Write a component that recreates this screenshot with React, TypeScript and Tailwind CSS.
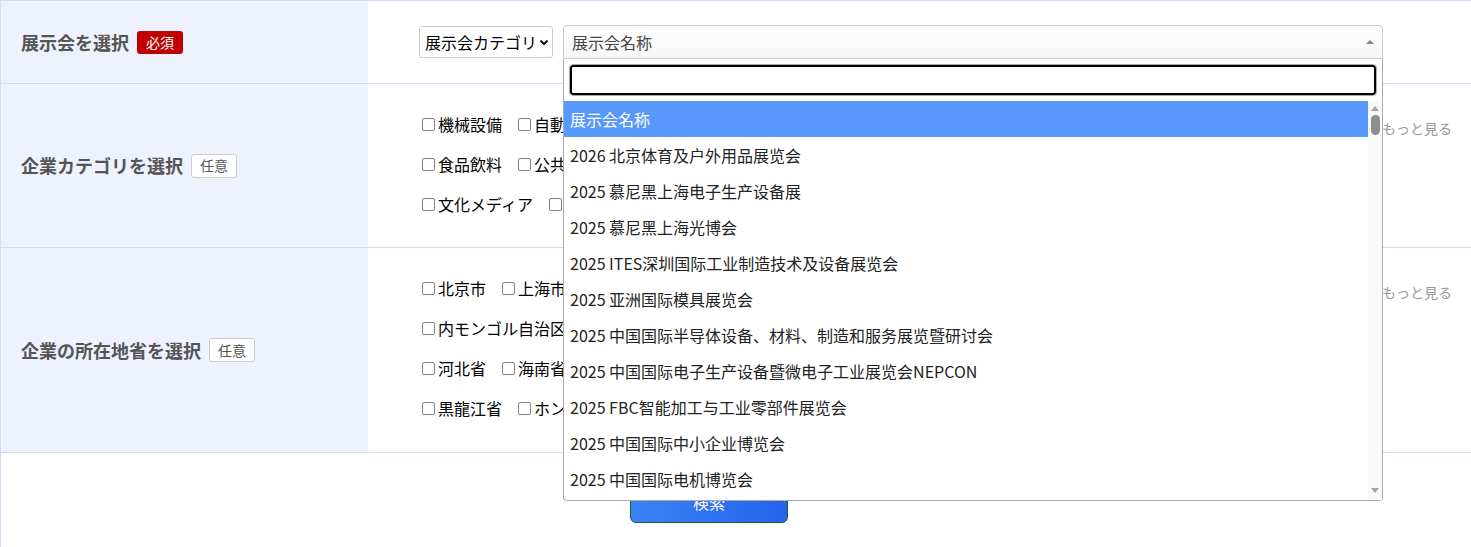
import React from "react";

const JP = { fontFamily: '"Noto Sans CJK JP", "Noto Sans", sans-serif' };
const SC = { fontFamily: '"Noto Sans CJK SC", "Noto Sans", sans-serif' };

function Box() {
  return <span className="inline-block w-[13px] h-[13px] border border-[#858585] rounded-[2px] bg-white mr-[3px] shrink-0" />;
}

function Item({ label }: { label: string }) {
  return (
    <span className="inline-flex items-center mr-[16px] text-[16px] text-black">
      <Box />
      {label}
    </span>
  );
}

function CheckRows({ rows }: { rows: string[][] }) {
  return (
    <div className="flex flex-col">
      {rows.map((r, i) => (
        <div key={i} className="flex items-center h-[40px]">
          {r.map((l) => (
            <Item key={l} label={l} />
          ))}
        </div>
      ))}
    </div>
  );
}

function Label({ text, required }: { text: string; required?: boolean }) {
  return (
    <div className="w-[367px] shrink-0 bg-[#eef2fe] flex items-center pl-[20px]">
      <span className="text-[18px] font-bold text-[#555]">{text}</span>
      {required ? (
        <span className="ml-[8px] inline-flex items-center h-[23px] px-[9px] rounded-[3px] bg-[#c00000] text-white text-[14px]">必須</span>
      ) : (
        <span className="ml-[8px] inline-flex items-center h-[24px] px-[8px] rounded-[3px] bg-white border border-[#ccc] text-[#555] text-[14px]">任意</span>
      )}
    </div>
  );
}

const options = [
  "展示会名称",
  "2026 北京体育及户外用品展览会",
  "2025 慕尼黑上海电子生产设备展",
  "2025 慕尼黑上海光博会",
  "2025 ITES深圳国际工业制造技术及设备展览会",
  "2025 亚洲国际模具展览会",
  "2025 中国国际半导体设备、材料、制造和服务展览暨研讨会",
  "2025 中国国际电子生产设备暨微电子工业展览会NEPCON",
  "2025 FBC智能加工与工业零部件展览会",
  "2025 中国国际中小企业博览会",
  "2025 中国国际电机博览会",
];

export default function App() {
  return (
    <div className="w-full min-h-[547px] bg-white border-l border-t border-[#cfdaf5]" style={JP}>
      {/* Row 1 */}
      <div className="flex h-[83px] border-b border-[#cfdaf5]">
        <Label text="展示会を選択" required />
        <div className="flex-1 flex items-center pl-[51px] pr-[88px]">
          <div className="flex items-center h-[32px] w-[134px] border border-[#ccc] rounded-[3px] pl-[5px] pr-[3px] text-[16px] text-black bg-white">
            <span className="flex-1 whitespace-nowrap overflow-hidden">展示会カテゴリ</span>
            <svg width="10" height="7" viewBox="0 0 10 7" className="shrink-0">
              <path d="M1.5 1.5 L5 5 L8.5 1.5" fill="none" stroke="#111" strokeWidth="2" />
            </svg>
          </div>
          <div className="relative flex-1 ml-[10px] z-10">
            <div className="flex items-center h-[34px] border border-[#ccc] rounded-t-[4px] bg-gradient-to-b from-white to-[#f6f6f6] pl-[8px] pr-[6px]">
              <span className="flex-1 text-[16px] text-[#444]">展示会名称</span>
              <svg width="10" height="6" viewBox="0 0 10 6" className="mr-[1px]">
                <path d="M1 5 L5 1 L9 5 Z" fill="#888" />
              </svg>
            </div>
            <div className="absolute left-0 right-0 top-full bg-white border border-t-0 border-[#aaa] rounded-b-[4px] px-[5px] pt-[5px]">
              <div className="h-[32px] rounded-[4px] border border-[#aaa] shadow-[inset_0_0_0_2px_#000] bg-white" />
              <div className="flex mt-[5px] h-[399px] -mx-[5px] overflow-hidden" style={SC}>
                <div className="flex-1 overflow-hidden">
                  {options.map((o, i) => (
                    <div
                      key={o}
                      className={
                        "h-[36px] flex items-center pl-[6px] text-[16px] whitespace-nowrap " +
                        (i === 0 ? "bg-[#5897fb] text-white" : "text-[#222]")
                      }
                      style={i === 0 ? JP : undefined}
                    >
                      {o}
                    </div>
                  ))}
                </div>
                <div className="w-[14px] bg-[#f9f9f9] flex flex-col items-center pt-[5px]">
                  <svg width="8" height="5" viewBox="0 0 8 5">
                    <path d="M0 5 L4 0 L8 5 Z" fill="#a3a3a3" />
                  </svg>
                  <div className="w-[9px] h-[20px] mt-[4px] rounded-full bg-[#8d8d8d]" />
                  <div className="flex-1" />
                  <svg width="8" height="5" viewBox="0 0 8 5" className="mb-[7px]">
                    <path d="M0 0 L8 0 L4 5 Z" fill="#a3a3a3" />
                  </svg>
                </div>
              </div>
            </div>
          </div>
        </div>
      </div>

      {/* Row 2 */}
      <div className="flex h-[164px] border-b border-[#cfdaf5]">
        <Label text="企業カテゴリを選択" />
        <div className="flex-1 flex pl-[54px] pr-[19px] pt-[20px]">
          <div className="flex-1">
            <CheckRows
              rows={[
                ["機械設備", "自動車部品", "電子部品", "化学材料"],
                ["食品飲料", "公共サービス", "医療機器"],
                ["文化メディア", "建築資材", "物流"],
              ]}
            />
          </div>
          <span className="text-[14px] text-[#999] leading-[40px] mt-[4px]">もっと見る</span>
        </div>
      </div>

      {/* Row 3 */}
      <div className="flex h-[205px] border-b border-[#cfdaf5]">
        <Label text="企業の所在地省を選択" />
        <div className="flex-1 flex pl-[54px] pr-[19px] pt-[20px]">
          <div className="flex-1">
            <CheckRows
              rows={[
                ["北京市", "上海市", "天津市", "重慶市"],
                ["内モンゴル自治区", "広東省"],
                ["河北省", "海南省", "山東省"],
                ["黒龍江省", "ホンコン", "マカオ"],
              ]}
            />
          </div>
          <span className="text-[14px] text-[#999] leading-[40px] mt-[4px]">もっと見る</span>
        </div>
      </div>

      {/* Search button */}
      <div className="pl-[629px] pt-[28px] pb-[25px]">
        <button className="w-[158px] h-[42px] rounded-[6px] border border-[#1d5a36] bg-gradient-to-r from-[#3b82f6] to-[#2563eb] text-white text-[16px]">
          検索
        </button>
      </div>
    </div>
  );
}
